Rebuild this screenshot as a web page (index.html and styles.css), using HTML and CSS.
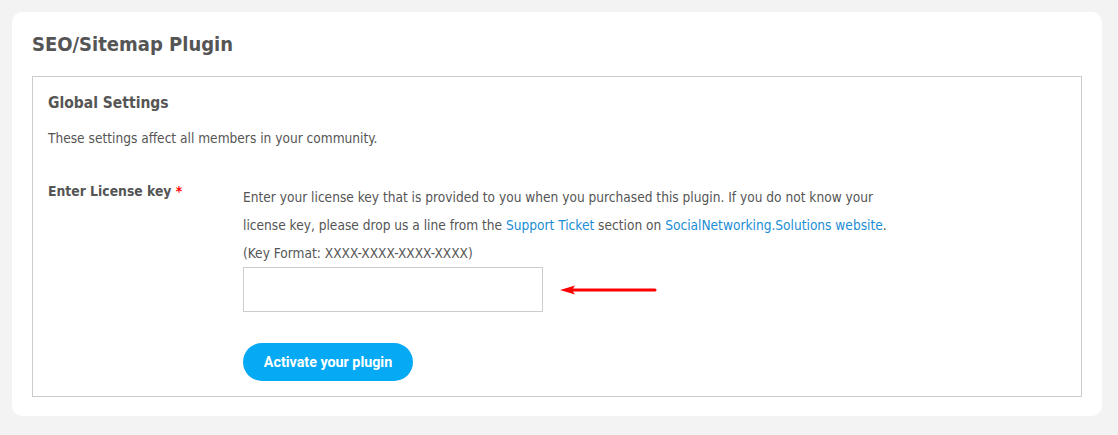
FILE: index.html
```html
<!DOCTYPE html>
<html>
<head>
<meta charset="utf-8">
<link rel="stylesheet" href="styles.css">
</head>
<body>
<div class="page">
  <div class="card">
    <h2 class="title">SEO/Sitemap Plugin</h2>
    <div class="panel">
      <h3 class="panel-title">Global Settings</h3>
      <p class="panel-desc">These settings affect all members in your community.</p>
      <div class="row">
        <div class="label">Enter License key <span class="req">*</span></div>
        <div class="field">
          <p class="help">Enter your license key that is provided to you when you purchased this plugin. If you do not know your license key, please drop us a line from the <a href="#">Support Ticket</a> section on <a href="#">SocialNetworking.Solutions website</a>.</p>
          <p class="format">(Key Format: XXXX-XXXX-XXXX-XXXX)</p>
          <div class="input-line">
            <input class="key-input" type="text">
            <svg class="arrow" width="100" height="12" viewBox="0 0 100 12">
              <line x1="10" y1="6" x2="95" y2="6" stroke="#f00" stroke-width="3" stroke-linecap="round"/>
              <polygon points="0,6 15,1.5 12,6 15,10.5" fill="#f00"/>
            </svg>
          </div>
          <button class="btn">Activate your plugin</button>
        </div>
      </div>
    </div>
  </div>
</div>
</body>
</html>
```
FILE: styles.css
```css
html, body {
  margin: 0;
  padding: 0;
  background: #f3f3f3;
}
.page {
  padding: 12px 16px 20px 12px;
}
.card {
  background: #fff;
  border-radius: 10px;
  padding: 20px 20px 19px 20px;
  font-family: "DejaVu Sans Condensed", "DejaVu Sans", sans-serif;
  color: #555;
}
.title {
  margin: 0 0 20px 0;
  font-size: 20px;
  line-height: 24px;
  font-weight: bold;
  color: #555;
}
.panel {
  border: 1px solid #ccc;
  padding: 15px 15px 15px 15px;
}
.panel-title {
  margin: 0;
  font-size: 15.5px;
  line-height: 22px;
  font-weight: bold;
  color: #555;
}
.panel-desc {
  margin: 15px 0 0 0;
  font-size: 13.6px;
  line-height: 18px;
}
.row {
  display: flex;
  margin-top: 35px;
}
.label {
  width: 195px;
  flex: none;
  font-size: 13.8px;
  font-weight: bold;
  line-height: 18px;
  color: #555;
}
.req {
  color: #f00;
}
.field {
  width: 670px;
  font-size: 13.6px;
  line-height: 28px;
  margin-top: 1px;
}
.help {
  margin: 0;
}
.help a {
  color: #1a8dd4;
  text-decoration: none;
}
.format {
  margin: 0;
  line-height: 28px;
}
.input-line {
  display: flex;
  align-items: center;
}
.key-input {
  width: 300px;
  height: 45px;
  box-sizing: border-box;
  border: 1px solid #ccc;
  margin: 0;
  padding: 0 10px;
}
.arrow {
  margin-left: 17px;
}
.btn {
  display: block;
  margin-top: 31px;
  width: 170px;
  height: 38px;
  border: none;
  border-radius: 19px;
  background: #05a9f4;
  color: #fff;
  font-family: Roboto, "Liberation Sans", sans-serif;
  font-weight: bold;
  font-size: 14.3px;
  padding: 0;
}
```
